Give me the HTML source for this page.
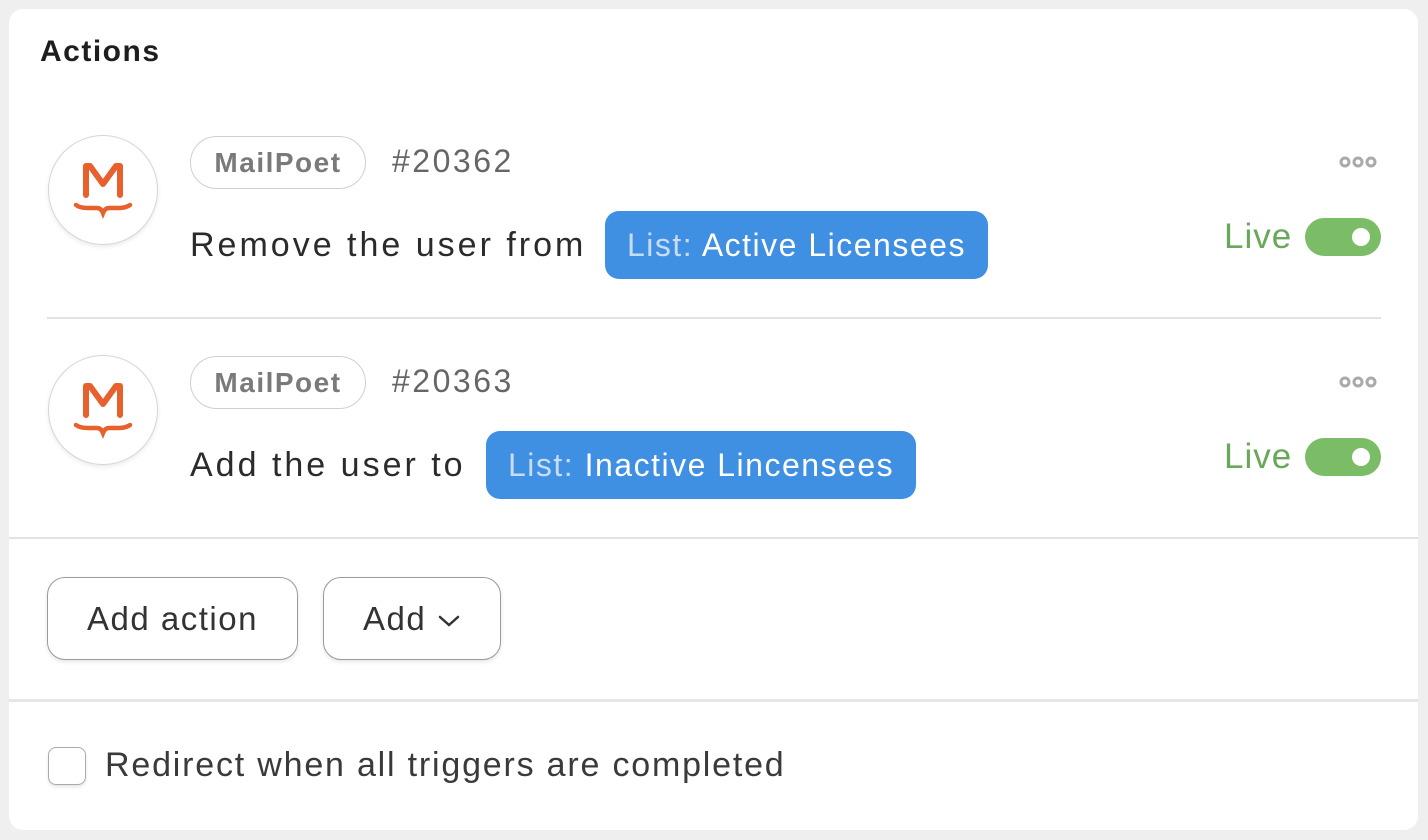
<!DOCTYPE html><html><head><style>
body{margin:0;background:#efefef;font-family:"Liberation Sans",sans-serif;width:1428px;height:840px;position:relative;overflow:hidden}
.card{position:absolute;left:9px;top:9px;width:1409px;height:821px;background:#fff;border-radius:14px}
.a{position:absolute;white-space:nowrap}
.circ{width:108px;height:108px;border:1.5px solid #d6d6d6;border-radius:50%;box-shadow:0 2px 5px rgba(0,0,0,.08);background:#fff}
.pill{height:51px;border:1.5px solid #cfcfcf;border-radius:27px;color:#7a7a7a;font-size:28px;font-weight:bold;line-height:51px;text-align:center;width:174px;letter-spacing:1.5px}
.num{font-size:32px;color:#666;letter-spacing:2.5px}
.txt{font-size:34px;color:#2b2b2b;letter-spacing:3px}
.chip{background:#3f8fe3;color:#fff;border-radius:14px;height:68px;line-height:68px;font-size:32px;padding:0 22px;letter-spacing:1.5px}
.chip span{color:#c8dcf6}
.live{font-size:35px;color:#69a85a;letter-spacing:1px}
.tog{width:76px;height:38px;border-radius:19px;background:#7bbd67}
.tog:after{content:"";position:absolute;right:11px;top:10px;width:18px;height:18px;border-radius:50%;background:#fff}
.dots{width:38px;height:12px}
.btn{height:81px;border:1.5px solid #9a9a9a;border-radius:18px;font-size:33px;color:#333;line-height:81px;text-align:center;box-shadow:0 2px 4px rgba(0,0,0,.1);letter-spacing:1.5px}
</style></head><body>
<div class="card"></div>
<div class="a" style="left:40px;top:35px;font-size:30px;font-weight:bold;color:#1e1e1e;letter-spacing:1.5px">Actions</div>

<!-- row 1 -->
<div class="a circ" style="left:48px;top:135px"></div>
<svg class="a" style="left:72px;top:160px" width="62" height="62" viewBox="0 0 62 62"><path d="M14 35V6h4l13 18 13-18h4v29" fill="none" stroke="#e8602c" stroke-width="6" stroke-linejoin="round" stroke-linecap="round"/><path d="M4 45q4 3 12 3h9q4 0 6 5q2-5 6-5h9q8 0 12-3" fill="none" stroke="#e8602c" stroke-width="4.5" stroke-linecap="round"/></svg>
<div class="a pill" style="left:190px;top:136px">MailPoet</div>
<div class="a num" style="left:392px;top:143px">#20362</div>
<div class="a txt" style="left:190px;top:226px">Remove the user from</div>
<div class="a chip" style="left:605px;top:211px"><span>List:</span> Active Licensees</div>
<svg class="a dots" style="left:1339px;top:156px" viewBox="0 0 38 12"><g fill="none" stroke="#aaa" stroke-width="3"><circle cx="6" cy="6" r="4"/><circle cx="19" cy="6" r="4"/><circle cx="32" cy="6" r="4"/></g></svg>
<div class="a live" style="left:1224px;top:217px">Live</div>
<div class="a tog" style="left:1305px;top:218px"></div>

<div class="a" style="left:47px;top:317px;width:1334px;height:1.5px;background:#e2e2e2"></div>

<!-- row 2 -->
<div class="a circ" style="left:48px;top:355px"></div>
<svg class="a" style="left:72px;top:380px" width="62" height="62" viewBox="0 0 62 62"><path d="M14 35V6h4l13 18 13-18h4v29" fill="none" stroke="#e8602c" stroke-width="6" stroke-linejoin="round" stroke-linecap="round"/><path d="M4 45q4 3 12 3h9q4 0 6 5q2-5 6-5h9q8 0 12-3" fill="none" stroke="#e8602c" stroke-width="4.5" stroke-linecap="round"/></svg>
<div class="a pill" style="left:190px;top:356px">MailPoet</div>
<div class="a num" style="left:392px;top:363px">#20363</div>
<div class="a txt" style="left:190px;top:446px">Add the user to</div>
<div class="a chip" style="left:486px;top:431px"><span>List:</span> Inactive Lincensees</div>
<svg class="a dots" style="left:1339px;top:376px" viewBox="0 0 38 12"><g fill="none" stroke="#aaa" stroke-width="3"><circle cx="6" cy="6" r="4"/><circle cx="19" cy="6" r="4"/><circle cx="32" cy="6" r="4"/></g></svg>
<div class="a live" style="left:1224px;top:437px">Live</div>
<div class="a tog" style="left:1305px;top:438px"></div>

<div class="a" style="left:9px;top:537px;width:1409px;height:1.5px;background:#e2e2e2"></div>

<div class="a btn" style="left:47px;top:577px;width:249px">Add action</div>
<div class="a btn" style="left:323px;top:577px;width:176px">Add <svg width="24" height="16" viewBox="0 0 24 16" style="vertical-align:middle"><path d="M3 4l9 8 9-8" fill="none" stroke="#333" stroke-width="2.5" stroke-linecap="round"/></svg></div>

<div class="a" style="left:9px;top:699px;width:1409px;height:3px;background:#e6e6e6"></div>

<div class="a" style="left:48px;top:747px;width:36px;height:36px;border:1.5px solid #aaa;border-radius:8px;box-shadow:0 2px 3px rgba(0,0,0,.1)"></div>
<div class="a txt" style="left:105px;top:746px;color:#3a3a3a;letter-spacing:1.8px">Redirect when all triggers are completed</div>
</body></html>
